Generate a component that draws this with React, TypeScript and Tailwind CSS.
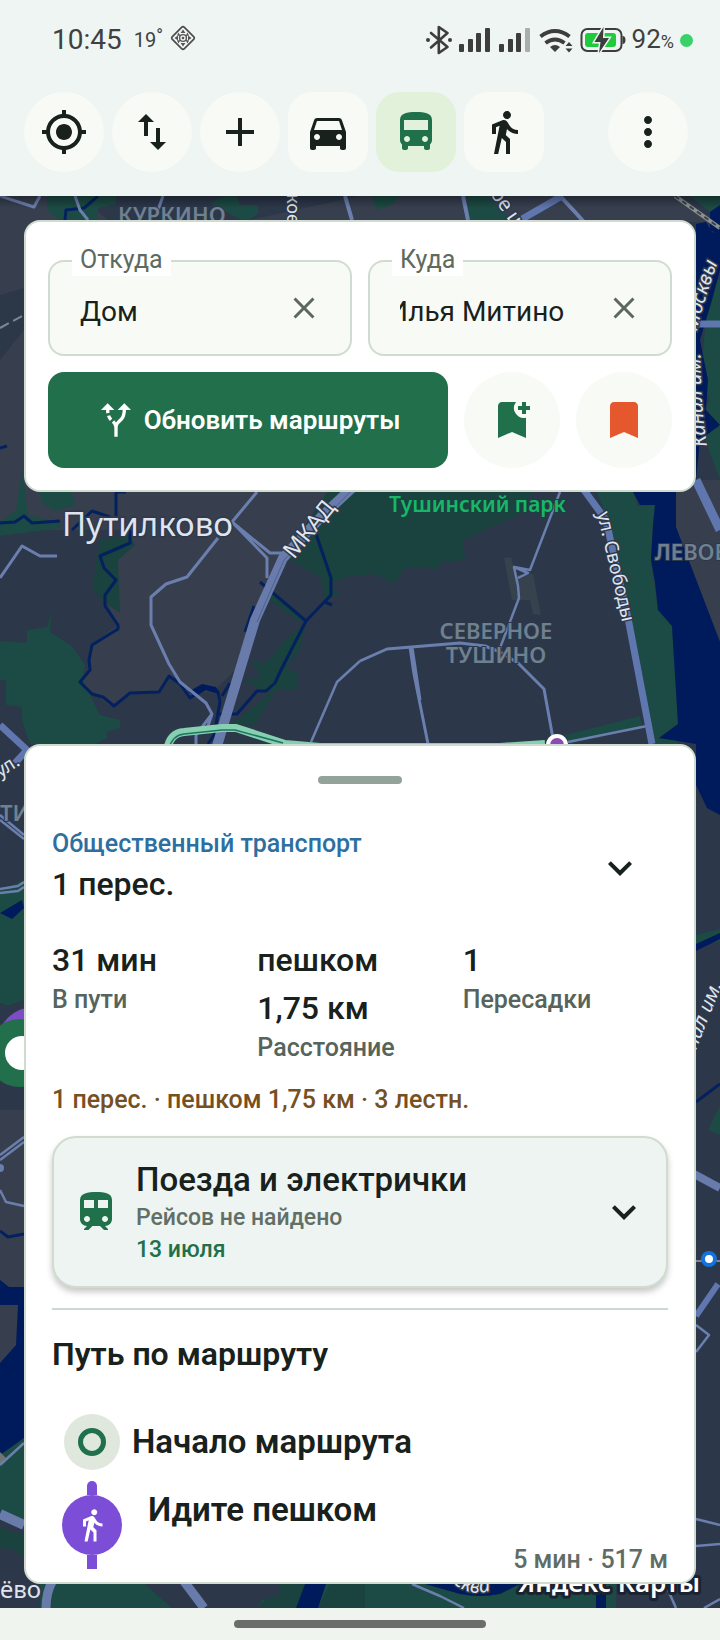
import { useLayoutEffect, useRef, useState } from "react";
import type { ReactNode } from "react";
import {
  MdAdd,
  MdAltRoute,
  MdBookmark,
  MdBookmarkAdd,
  MdClose,
  MdDirectionsBus,
  MdDirectionsCar,
  MdDirectionsWalk,
  MdExpandMore,
  MdMoreVert,
  MdMyLocation,
  MdSwapVert,
  MdTrain,
} from "react-icons/md";

function StatusGlyphs() {
  return (
    <svg width="202" height="32" viewBox="426 23 202 32" aria-hidden="true">
      <path
        d="M431 32 447.500 46l-8.700 6V26l8.700 6L431 46.500"
        fill="none"
        stroke="#3d3d3d"
        strokeWidth="2.600"
        strokeLinejoin="round"
        strokeLinecap="round"
      />
      <g fill="#3d3d3d">
        <circle cx="428" cy="39" r="2" />
        <circle cx="450" cy="39" r="2" />
        <rect x="459" y="43" width="5" height="8" rx="1" />
        <rect x="468" y="38" width="5" height="13" rx="1" />
        <rect x="476" y="32" width="5" height="19" rx="1" />
        <rect x="485" y="27" width="5" height="24" rx="1" />
        <rect x="499" y="43" width="5" height="8" rx="1" />
        <rect x="508" y="38" width="5" height="13" rx="1" />
        <rect x="516" y="32" width="5" height="19" rx="1" />
        <rect x="525" y="27" width="5" height="24" rx="1" fill="#a9adab" />
        <path d="M550 46q5-4 10 0l-5 5z" />
        <path d="M565.500 45l3.500-4 3.500 4zM565.500 47.500h7l-3.500 4z" />
        <path d="M622.500 35q3 0 3 4t-3 4z" />
      </g>
      <g fill="none" stroke="#3d3d3d" strokeWidth="4">
        <path d="M540.500 35.500q14.500-11 29 0" />
        <path d="M545.500 42q9.500-7 19 0" />
      </g>
      <rect x="581.500" y="28" width="40" height="22" rx="6" fill="none" stroke="#3d3d3d" strokeWidth="2" />
      <rect x="585" y="32" width="31" height="14" rx="3" fill="#1fcb3c" />
      <path
        d="M603.500 26 594.500 41h6l-1.500 11 10-15h-6z"
        fill="#3d3d3d"
        stroke="#eef5f3"
        strokeWidth="3"
        paintOrder="stroke"
      />
    </svg>
  );
}

function StatusBar() {
  return (
    <div className="flex h-[76px] items-center pt-1 pr-[27px] pl-13 text-[#404040]">
      <span className="text-[28px] leading-8">10:45</span>
      <span className="ml-3 flex items-start text-[20px] leading-8">
        19<span className="text-[18px] leading-6">°</span>
      </span>
      <svg className="mb-1 ml-[7px]" width="26" height="26" viewBox="0 0 26 26" aria-hidden="true">
        <rect x="4.500" y="4.500" width="17" height="17" rx="2" transform="rotate(45 13 13)" fill="none" stroke="#4a4a4a" strokeWidth="1.600" />
        <path
          d="M13 4.500l2.400 3.500h-4.800zM13 21.500l2.400-3.500h-4.800zM4.500 13l3.500-2.400v4.800zM21.500 13l-3.500-2.400v4.800zM8.500 7.500l2 3.500-3.500-.5zM17.500 7.500l-2 3.500 3.500-.5zM8.500 18.500l2-3.500-3.500.5zM17.500 18.500l-2-3.500 3.500.5z"
          fill="#555"
        />
        <circle cx="13" cy="13" r="3.400" fill="none" stroke="#555" strokeWidth="1.400" />
        <circle cx="13" cy="13" r="1.300" fill="#555" />
      </svg>
      <div className="ml-auto flex items-center">
        <StatusGlyphs />
        <span className="ml-1 text-[26px] leading-8">
          92<span className="text-[18px]">%</span>
        </span>
        <span className="ml-[6px] size-[13px] rounded-full bg-[#3ad168]" />
      </div>
    </div>
  );
}

function ToolButton({
  label,
  square = false,
  active = false,
  className = "",
  children,
}: {
  label: string;
  square?: boolean;
  active?: boolean;
  className?: string;
  children: ReactNode;
}) {
  return (
    <button
      type="button"
      aria-label={label}
      aria-pressed={square ? active : undefined}
      className={`flex size-20 shrink-0 items-center justify-center text-[48px] ${
        square ? "rounded-3xl" : "rounded-full"
      } ${active ? "bg-[#e1f1da] text-[#20704b]" : "bg-[#f8faf6] text-[#18211b]"} ${className}`}
    >
      {children}
    </button>
  );
}

function CityMap() {
  return (
    <svg
      className="absolute inset-0 size-full"
      viewBox="0 196 720 1412"
      preserveAspectRatio="xMidYMin slice"
      fontFamily='"Noto Sans", "Open Sans", sans-serif'
      aria-hidden="true"
    >
      <defs>
        <path id="canal-north-a" d="M707 446C702 410 700 390 700 300" />
        <path id="canal-north-b" d="M697 331Q704 296 730 230" />
        <path id="canal-south" d="M688 1071Q702 1034 732 960" />
        <path id="river" d="M453 1583Q475 1602 505 1584" />
        <linearGradient id="header-shadow" x1="0" y1="0" x2="0" y2="1">
          <stop offset="0" stopColor="#000" stopOpacity=".35" />
          <stop offset="1" stopColor="#000" stopOpacity="0" />
        </linearGradient>
      </defs>
      <rect y="196" width="720" height="1412" fill="#2c374a" />

      <g fill="#373f4f">
        <path d="M0 196H80L110 222H240L360 196V492H350L285 555 255 620 235 670 215 690 190 695 170 675 160 692 135 693 110 706 80 682 88 670 90 645 118 625 105 600 117 580 100 555 130 530 0 530z" />
        <path d="M360 196H680L720 225V222H360zM676 480H720V642L676 527zM0 1110H24V1290H0z" />
      </g>
      <path d="M0 295 24 288V330L0 360z" fill="#2c3748" />
      <g fill="#1c4a44">
        <path d="M0 641 27 643V630L47 627 52 612 50 632 72 646 85 665 83 680 100 715 120 720V728L107 732V738L95 744H30L22 720V707L6 705V680L0 680z" />
        <path d="M47 196H116V204L98 208V222H62L47 210zM210 204 224 196H236L240 205H258V214L245 222 232 215z" />
        <path d="M22 470 28 515 60 523 61 528 0 536V522L16 510zM40 492H72L75 505 55 511 41 502z" />
        <path d="M372 196H400L393 204 377 210zM467 196H486L515 222H468zM690 196H720V208L710 212z" />
        <path d="M597 492H633L638 506 655 505 653 525 651 560 658 610 672 626 678 724 659 738 676 740 684 750H654L630 610 615 540z" />
        <path d="M565 735 640 716 642 726 570 744zM0 890 24 880V1000L8 1006 0 1003z" />
        <path d="M710 280H720V480L705 440 696 430V420L710 400 700 380zM720 1105 708 1130 720 1135zM696 935 720 929V942L696 944z" />
        <path d="M0 1455 24 1438V1530L0 1520zM40 1570H620V1608H40z" />
      </g>
      <g fill="#1a423f">
        <path d="M335 480H540L518 515 463 540 465 560 442 562 437 569 405 567 395 584 375 574 345 577 330 585 340 594 325 600 321 578 290 560 285 555z" />
        <path d="M100 540 130 535 135 545 118 560 120 613 108 605 92 588z" />
        <path d="M306 622 300 650 285 668 297 672V690L276 690 255 725 232 724 270 694 262 690 244 681 260 676 251 660 265 664 285 640zM270 592 306 620 300 622 270 600z" />
        <path d="M0 1528 24 1535V1556L0 1550zM330 1584H365V1608H318zM280 1584H305L296 1608H258z" />
      </g>
      <g fill="#001b5c">
        <path d="M633 492H676V527L720 642V815L707 808 696 785V744L659 738 678 724 672 626 658 610 655 582 651 560 653 525 655 505 640 505z" />
        <path d="M710 212 720 205V235L710 230zM696 224 706 222 712 232 720 234V270L712 300 700 340 708 380 706 410 720 425 700 440 696 480z" />
        <path d="M0 1280 9 1287H24V1438L0 1455zM0 913 22 900 24 908 12 919z" />
        <path d="M696 944 720 933V939L696 951zM305 1584H326L318 1608H296zM425 1584H520L500 1594Q480 1598 460 1594zM596 1584H606V1608H596z" />
      </g>
      <path d="M0 1305H18L16 1345 0 1363z" fill="#373f4f" />
      <g fill="#2c374a">
        <path d="M0 1548 15 1550 24 1562V1584H0zM145 1584H280V1595L262 1600 258 1608H172zM616 1584H720V1608H616z" />
      </g>
      <path d="M0 1452 6 1458 0 1465z" fill="#6f7477" />
      <path d="M504 558 511 557 515 575 533 574 541 615 533 614 530 600H512z" fill="#36424e" />

      <g fill="none" stroke="#03215f" strokeWidth="3" strokeLinejoin="round">
        <path d="M98 196 84 208 66 210 65 220M0 448 7 446M126 492H116V516M0 523 15 522 24 516 32 523 60 521M72 530 92 511 110 517M130 530V543L100 556 104 568 116 580 105 595V606L118 625V629L92 645 89 660 90 670 80 682 92 694 103 697 114 706 130 693 159 692 169 676 180 684 190 698 205 688 218 692 220 702 214 735 208 744" />
        <path d="M316 534 331 578V595L306 621 281 670 275 683 266 691H257L237 714H217M260 582 306 621M325 602 332 605M254 606 245 632M230 683 222 696M0 1231 8 1237 24 1234M696 1102 720 1084" />
      </g>
      <path d="M188 692 202 684 216 687 220 694 206 690 196 696z" fill="#001b5c" />

      <g fill="none" stroke="#6b7fae" strokeWidth="3" strokeLinejoin="round">
        <path d="M0 196 34 207 40 196M75 196 80 210 88 220M163 196 158 210" />
        <path d="M345 196 352 220M463 196 468 220M560 196 575 212 584 222" strokeWidth="4" />
        <path d="M257 492 232 522 270 553H283M234 524 267 558V578M218 538 187 577 166 584 151 597V625L169 664 180 682 206 703 212 714 196 735V744M212 714 206 732M0 578 22 546 40 556H57" />
        <path d="M360 661 387 649 460 643 485 646 500 652 518 663 544 689 554 744M410 647 414 674 428 744M412 647 420 700" />
        <path d="M360 661 337 682 311 742M560 492 530 570 514 567 518 586 519 598 500 648M514 567 528 573 518 578M568 742 647 726M0 815 24 835M0 820 24 839M0 889 18 886 24 882M0 893 18 891 24 887" strokeWidth="2.500" />
        <path d="M0 1155 24 1137M0 1160 24 1142M0 1190 6 1202 24 1206M0 1465 24 1443M696 1352 709 1335 696 1325M696 1519 720 1525M696 1546 720 1544M412 1584 440 1596 464 1608M668 1590 676 1608M704 1608 720 1599" strokeWidth="2.500" />
      </g>
      <g fill="none" stroke="#5f76ae" strokeLinejoin="round">
        <path d="M517 222 562 196" strokeWidth="7" />
        <path d="M584 490 606 520 628 618 652 744" strokeWidth="7" />
        <path d="M696 480 708 505 720 530" strokeWidth="9" />
        <path d="M0 725 27 750 15 763" strokeWidth="7" />
        <path d="M696 1316 718 1284" strokeWidth="6" />
        <path d="M696 324H720" strokeWidth="7" />
      </g>
      <g fill="none" stroke="#687bab" strokeLinejoin="round">
        <path d="M352 488 322 516 283 558 255 620 217 746" strokeWidth="10" />
        <path d="M0 1514 24 1525" strokeWidth="10" />
        <path d="M53 1580Q46 1592 46 1608M183 1580 204 1608" strokeWidth="9" />
        <path d="M694 1174 720 1188" strokeWidth="8" />
      </g>
      <path d="M350 492 284 560 257 622" fill="none" stroke="#4f6192" strokeWidth="1" />
      <path d="M675 196 720 228" stroke="#8b918f" strokeWidth="4" />
      <path d="M675 196 720 228" stroke="#3c4450" strokeWidth="2" strokeDasharray="5 4" />
      <path d="M0 328 22 316M696 1261H720" stroke="#7e8791" strokeWidth="2" strokeDasharray="10 5" />

      <g fill="none" strokeLinejoin="round">
        <path d="M167 750Q170 733 184 732L222 728H236L285 744 320 747H500L545 744" stroke="#86cfb1" strokeWidth="8" />
        <path d="M169 748Q173 735 184 734L222 730H235L283 743" stroke="#1b7560" strokeWidth="1.500" />
      </g>
      <circle cx="557" cy="745" r="11" fill="#fff" />
      <circle cx="557" cy="745" r="7" fill="#8a4bb5" />
      <circle cx="34" cy="1044" r="37" fill="#7d4dc4" />
      <circle cx="20" cy="1053" r="34" fill="#22704b" />
      <circle cx="22" cy="1053" r="17" fill="#fff" />
      <circle cx="709" cy="1259" r="6" fill="#fff" stroke="#1273de" strokeWidth="4" />
      <circle cx="0" cy="1168" r="4" fill="#6b7fae" />

      <g fill="#6f8090" fontSize="22" fontWeight="600" stroke="#2c374a" strokeWidth="2" paintOrder="stroke">
        <text x="118" y="223">КУРКИНО</text>
        <text x="496" y="639" textAnchor="middle">СЕВЕРНОЕ</text>
        <text x="496" y="663" textAnchor="middle">ТУШИНО</text>
        <text x="655" y="560">ЛЕВОБ</text>
        <text x="0" y="821">ТИ</text>
      </g>
      <g fill="#dfe4ee" stroke="#2f394b" strokeWidth="3" paintOrder="stroke">
        <text x="62" y="536" fontSize="33">Путилково</text>
        <text x="0" y="1598" fontSize="24">ёво</text>
        <text transform="translate(294 560) rotate(-51)" fontSize="23">МКАД</text>
        <text transform="translate(597 513) rotate(77)" fontSize="19">ул. Свободы</text>
        <text transform="translate(0 778) rotate(-33)" fontSize="19">ул.</text>
        <text transform="translate(287 194) rotate(90)" fontSize="18">кое</text>
        <text transform="translate(490 194) rotate(55)" fontSize="20">ое ш.</text>
        <g fontSize="20" fontStyle="italic">
          <text>
            <textPath href="#canal-north-a">Канал им.</textPath>
          </text>
          <text>
            <textPath href="#canal-north-b">Москвы</textPath>
          </text>
          <text>
            <textPath href="#canal-south">Канал им.</textPath>
          </text>
          <text>
            <textPath href="#river">сква</textPath>
          </text>
        </g>
      </g>
      <text x="389" y="512" fontSize="21" fontWeight="600" fill="#18b768" stroke="#1a423f" strokeWidth="2" paintOrder="stroke">
        Тушинский парк
      </text>
      <text x="700" y="1592" textAnchor="end" fontSize="26" fontWeight="600" fill="#fff" stroke="#1b2230" strokeWidth="6" strokeLinejoin="round" paintOrder="stroke">
        Яндекс Карты
      </text>
      <rect y="196" width="720" height="12" fill="url(#header-shadow)" />
    </svg>
  );
}

function PlaceField({ id, label, initial }: { id: string; label: string; initial: string }) {
  const [value, setValue] = useState(initial);
  const input = useRef<HTMLInputElement>(null);

  useLayoutEffect(() => {
    if (input.current) input.current.scrollLeft = input.current.scrollWidth;
  }, []);

  return (
    <div className="relative flex h-24 items-center rounded-2xl border-2 border-[#d0dccf] bg-[#f8faf5] pr-7 pl-[30px]">
      <label
        htmlFor={id}
        className="absolute -top-[18px] left-[22px] bg-white px-2 text-[25px] leading-8 text-[#5d6a60]"
      >
        {label}
      </label>
      <input
        ref={input}
        id={id}
        value={value}
        onChange={(e) => setValue(e.target.value)}
        className="mt-2 min-w-0 flex-1 bg-transparent text-[28px] leading-9 text-[#18211b] outline-none"
      />
      <button type="button" aria-label={`Очистить: ${label}`} onClick={() => setValue("")} className="ml-[42px] text-[36px] text-[#5c675f]">
        <MdClose />
      </button>
    </div>
  );
}

function SearchCard() {
  return (
    <section className="rounded-2xl border-2 border-[#d0dccf] bg-white px-[22px] pt-[38px] pb-[22px]">
      <div className="grid grid-cols-2 gap-4">
        <PlaceField id="from" label="Откуда" initial="Дом" />
        <PlaceField id="to" label="Куда" initial="Илья Митино" />
      </div>
      <div className="mt-4 flex gap-4">
        <button
          type="button"
          className="flex h-24 flex-1 items-center justify-center gap-2 rounded-2xl bg-[#216f4b] text-[26px] leading-8 font-semibold text-white"
        >
          <MdAltRoute className="text-[40px]" />
          Обновить маршруты
        </button>
        <button type="button" aria-label="Сохранить маршрут" className="flex size-24 items-center justify-center rounded-full bg-[#f8faf6] text-[48px] text-[#20704b]">
          <MdBookmarkAdd />
        </button>
        <button type="button" aria-label="Закладки" className="flex size-24 items-center justify-center rounded-full bg-[#f8faf6] text-[48px] text-[#e5572d]">
          <MdBookmark />
        </button>
      </div>
    </section>
  );
}

const stats = [
  { value: "31 мин", label: "В пути" },
  { value: "пешком 1,75 км", label: "Расстояние" },
  { value: "1", label: "Пересадки" },
];

function RouteSheet() {
  return (
    <section className="flex flex-col rounded-2xl border-2 border-[#d0dccf] bg-white px-[26px] pt-[30px] pb-[6px] font-medium text-[#18211b]">
      <div className="mx-auto h-2 w-21 rounded-full bg-[#93a29a]" />

      <header className="mt-9 flex h-24 items-center justify-between">
        <div>
          <p className="text-[25px] leading-8 text-[#2d6f9f]">Общественный транспорт</p>
          <h1 className="text-[32px] leading-[48px]">1 перес.</h1>
        </div>
        <button type="button" aria-label="Развернуть маршрут" className="flex size-24 items-center justify-center text-[48px]">
          <MdExpandMore />
        </button>
      </header>

      <dl className="mt-5 grid grid-cols-3">
        {stats.map((s) => (
          <div key={s.label} className="flex flex-col-reverse justify-end pr-14 last:pr-0">
            <dt className="text-[25px] leading-8 text-[#56645b]">{s.label}</dt>
            <dd className="text-[32px] leading-[48px]">{s.value}</dd>
          </div>
        ))}
      </dl>

      <p className="mt-5 text-[25px] leading-8 text-[#77501f]">1 перес. · пешком 1,75 км · 3 лестн.</p>

      <button
        type="button"
        className="mt-5 flex items-center gap-4 rounded-3xl border-2 border-[#d0dccf] bg-[#eef4f2] px-[18px] py-5 text-left shadow-[0_4px_6px_rgba(0,0,0,0.22)]"
      >
        <MdTrain className="shrink-0 text-[48px] text-[#20704b]" />
        <span className="flex flex-1 flex-col">
          <span className="text-[33px] leading-[44px]">Поезда и электрички</span>
          <span className="text-[23px] leading-8 text-[#626f66]">Рейсов не найдено</span>
          <span className="text-[23px] leading-8 text-[#20704b]">13 июля</span>
        </span>
        <MdExpandMore className="shrink-0 text-[48px]" />
      </button>

      <hr className="mt-5 border-t-2 border-[#d0d8d3]" />

      <h2 className="mt-5 text-[32px] leading-[48px] font-semibold">Путь по маршруту</h2>

      <ol className="mt-9 pl-[10px]">
        <li className="flex items-center gap-3 pl-[2px]">
          <span className="flex size-14 items-center justify-center rounded-full bg-[#e0e8de]">
            <span className="size-7 rounded-full border-5 border-[#20704b]" />
          </span>
          <span className="text-[33px] leading-[48px] font-semibold">Начало маршрута</span>
        </li>
        <li className="flex items-start gap-[26px] pt-[11px]">
          <span className="flex flex-col items-center">
            <span className="h-[14px] w-[10px] rounded-t-full bg-[#7c4dd6]" />
            <span className="flex size-15 items-center justify-center rounded-full bg-[#7c4dd6] text-[36px] text-white">
              <MdDirectionsWalk />
            </span>
            <span className="h-[14px] w-[10px] bg-[#7c4dd6]" />
          </span>
          <span className="flex flex-1 flex-col pt-[5px]">
            <span className="text-[33px] leading-[48px] font-semibold">Идите пешком</span>
            <span className="mt-[10px] text-right text-[25px] leading-8 text-[#606d64]">5 мин · 517 м</span>
          </span>
        </li>
      </ol>
    </section>
  );
}

export default function App() {
  return (
    <div className="flex min-h-screen flex-col bg-[#eef5f3] font-['Roboto',sans-serif]">
      <header>
        <StatusBar />
        <nav className="flex gap-2 pt-4 pr-8 pb-6 pl-6">
          <ToolButton label="Моё местоположение">
            <MdMyLocation />
          </ToolButton>
          <ToolButton label="Поменять местами">
            <MdSwapVert />
          </ToolButton>
          <ToolButton label="Добавить точку">
            <MdAdd />
          </ToolButton>
          <ToolButton label="На машине" square>
            <MdDirectionsCar />
          </ToolButton>
          <ToolButton label="Общественный транспорт" square active>
            <MdDirectionsBus />
          </ToolButton>
          <ToolButton label="Пешком" square>
            <MdDirectionsWalk />
          </ToolButton>
          <ToolButton label="Меню" className="ml-auto">
            <MdMoreVert />
          </ToolButton>
        </nav>
      </header>
      <main className="relative flex flex-1 flex-col overflow-hidden">
        <CityMap />
        <div className="relative flex flex-1 flex-col justify-between gap-6 p-6">
          <SearchCard />
          <RouteSheet />
        </div>
      </main>
      <footer className="flex h-8 items-center justify-center bg-[#eff4ee]">
        <span className="h-2 w-63 rounded-full bg-[#6a6d69]" />
      </footer>
    </div>
  );
}
